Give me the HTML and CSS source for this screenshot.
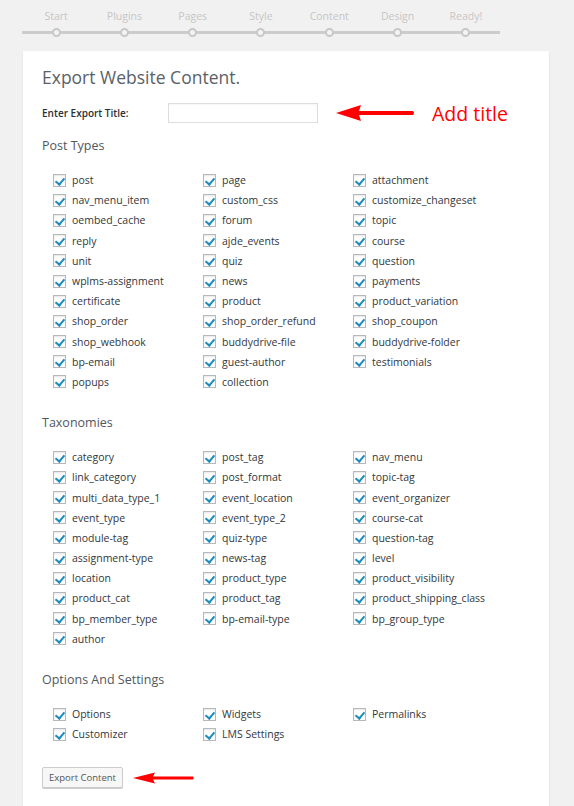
FILE: index.html
```html
<!DOCTYPE html>
<html>
<head>
<meta charset="utf-8">
<link rel="stylesheet" href="styles.css">
</head>
<body>
<div class="steps">
  <div class="step"><span class="step-label">Start</span><span class="dot"></span></div>
  <div class="step"><span class="step-label">Plugins</span><span class="dot"></span></div>
  <div class="step"><span class="step-label">Pages</span><span class="dot"></span></div>
  <div class="step"><span class="step-label">Style</span><span class="dot"></span></div>
  <div class="step"><span class="step-label">Content</span><span class="dot"></span></div>
  <div class="step"><span class="step-label">Design</span><span class="dot"></span></div>
  <div class="step"><span class="step-label">Ready!</span><span class="dot"></span></div>
</div>

<div class="card">
  <h1 class="title">Export Website Content.</h1>
  <div class="title-row">
    <label class="field-label">Enter Export Title:</label>
    <input class="field-input" type="text">
    <svg class="arrow-big" width="80" height="18" viewBox="0 0 80 18"><path d="M0 9 L25 1 L23 7 L77 7 Q79 9 77 11 L23 11 L25 17 Z" fill="#f00"/></svg>
    <span class="note">Add title</span>
  </div>

  <h2 class="section">Post Types</h2>
  <div class="grid grid-posts">
    <div class="item"><span class="cb"></span>post</div>
    <div class="item"><span class="cb"></span>page</div>
    <div class="item"><span class="cb"></span>attachment</div>
    <div class="item"><span class="cb"></span>nav_menu_item</div>
    <div class="item"><span class="cb"></span>custom_css</div>
    <div class="item"><span class="cb"></span>customize_changeset</div>
    <div class="item"><span class="cb"></span>oembed_cache</div>
    <div class="item"><span class="cb"></span>forum</div>
    <div class="item"><span class="cb"></span>topic</div>
    <div class="item"><span class="cb"></span>reply</div>
    <div class="item"><span class="cb"></span>ajde_events</div>
    <div class="item"><span class="cb"></span>course</div>
    <div class="item"><span class="cb"></span>unit</div>
    <div class="item"><span class="cb"></span>quiz</div>
    <div class="item"><span class="cb"></span>question</div>
    <div class="item"><span class="cb"></span>wplms-assignment</div>
    <div class="item"><span class="cb"></span>news</div>
    <div class="item"><span class="cb"></span>payments</div>
    <div class="item"><span class="cb"></span>certificate</div>
    <div class="item"><span class="cb"></span>product</div>
    <div class="item"><span class="cb"></span>product_variation</div>
    <div class="item"><span class="cb"></span>shop_order</div>
    <div class="item"><span class="cb"></span>shop_order_refund</div>
    <div class="item"><span class="cb"></span>shop_coupon</div>
    <div class="item"><span class="cb"></span>shop_webhook</div>
    <div class="item"><span class="cb"></span>buddydrive-file</div>
    <div class="item"><span class="cb"></span>buddydrive-folder</div>
    <div class="item"><span class="cb"></span>bp-email</div>
    <div class="item"><span class="cb"></span>guest-author</div>
    <div class="item"><span class="cb"></span>testimonials</div>
    <div class="item"><span class="cb"></span>popups</div>
    <div class="item"><span class="cb"></span>collection</div>
  </div>

  <h2 class="section">Taxonomies</h2>
  <div class="grid grid-tax">
    <div class="item"><span class="cb"></span>category</div>
    <div class="item"><span class="cb"></span>post_tag</div>
    <div class="item"><span class="cb"></span>nav_menu</div>
    <div class="item"><span class="cb"></span>link_category</div>
    <div class="item"><span class="cb"></span>post_format</div>
    <div class="item"><span class="cb"></span>topic-tag</div>
    <div class="item"><span class="cb"></span>multi_data_type_1</div>
    <div class="item"><span class="cb"></span>event_location</div>
    <div class="item"><span class="cb"></span>event_organizer</div>
    <div class="item"><span class="cb"></span>event_type</div>
    <div class="item"><span class="cb"></span>event_type_2</div>
    <div class="item"><span class="cb"></span>course-cat</div>
    <div class="item"><span class="cb"></span>module-tag</div>
    <div class="item"><span class="cb"></span>quiz-type</div>
    <div class="item"><span class="cb"></span>question-tag</div>
    <div class="item"><span class="cb"></span>assignment-type</div>
    <div class="item"><span class="cb"></span>news-tag</div>
    <div class="item"><span class="cb"></span>level</div>
    <div class="item"><span class="cb"></span>location</div>
    <div class="item"><span class="cb"></span>product_type</div>
    <div class="item"><span class="cb"></span>product_visibility</div>
    <div class="item"><span class="cb"></span>product_cat</div>
    <div class="item"><span class="cb"></span>product_tag</div>
    <div class="item"><span class="cb"></span>product_shipping_class</div>
    <div class="item"><span class="cb"></span>bp_member_type</div>
    <div class="item"><span class="cb"></span>bp-email-type</div>
    <div class="item"><span class="cb"></span>bp_group_type</div>
    <div class="item"><span class="cb"></span>author</div>
  </div>

  <h2 class="section">Options And Settings</h2>
  <div class="grid grid-options">
    <div class="item"><span class="cb"></span>Options</div>
    <div class="item"><span class="cb"></span>Widgets</div>
    <div class="item"><span class="cb"></span>Permalinks</div>
    <div class="item"><span class="cb"></span>Customizer</div>
    <div class="item"><span class="cb"></span>LMS Settings</div>
  </div>

  <div class="button-row">
    <button class="btn">Export Content</button>
    <svg class="arrow-small" width="62" height="12" viewBox="0 0 62 12"><path d="M0 6 L22 0.5 L20 4.5 L60 4.5 Q61.5 6 60 7.5 L20 7.5 L22 11.5 Z" fill="#f00"/></svg>
  </div>
</div>
</body>
</html>
```

FILE: styles.css
```css
* { box-sizing: border-box; }

body {
  margin: 0;
  background: #f1f1f1;
  font-family: "Open Sans", "Noto Sans", sans-serif;
  color: #32373c;
}

.steps {
  margin: 0 0 0 22px;
  width: 478px;
  height: 51px;
  display: grid;
  grid-template-columns: repeat(7, 1fr);
  background: linear-gradient(#ccc, #ccc) no-repeat 0 31px / 100% 3px;
}

.step {
  display: flex;
  flex-direction: column;
  align-items: center;
  padding-top: 8px;
}

.step-label {
  font-size: 10.5px;
  line-height: 16px;
  color: #c6c6c6;
  height: 16px;
}

.dot {
  margin-top: 4px;
  width: 9px;
  height: 9px;
  border-radius: 50%;
  border: 2px solid #c8c8c8;
  background: #f4f4f4;
}

.card {
  margin-left: 23px;
  width: 526px;
  height: 760px;
  background: #fff;
  box-shadow: 0 1px 2px rgba(0,0,0,0.1);
  padding: 14px 0 0 19px;
}

.title {
  margin: 0;
  font-size: 17.5px;
  line-height: 24px;
  font-weight: 400;
  color: #5b6168;
}

.title-row {
  margin-top: 14px;
  height: 20px;
  display: flex;
  align-items: center;
}

.field-label {
  width: 126px;
  font-size: 10px;
  font-weight: 600;
  color: #2b2f33;
}

.field-input {
  width: 150px;
  height: 20px;
  border: 1px solid #ddd;
  margin: 0;
  padding: 0;
  box-shadow: inset 0 1px 2px rgba(0,0,0,0.04);
}

.arrow-big {
  margin-left: 18px;
}

.note {
  margin-left: 16px;
  font-size: 19.5px;
  color: #f00;
  line-height: 20px;
  margin-top: 1px;
}

.section {
  margin: 13px 0 0 0;
  font-size: 12.5px;
  line-height: 20px;
  font-weight: 400;
  color: #50575e;
}

.grid + .section { margin-top: 21px; }

.grid {
  margin: 14px 0 0 11px;
  display: grid;
  grid-template-columns: repeat(3, 150px);
  grid-auto-rows: 20.2px;
}

.item {
  display: flex;
  align-items: center;
  font-size: 10.5px;
  color: #32373c;
}

.cb {
  position: relative;
  width: 13px;
  height: 13px;
  border: 1px solid #b4b9be;
  background: #fff;
  box-shadow: inset 0 1px 2px rgba(0,0,0,0.1);
  margin-right: 6px;
  flex: none;
}

.cb::after {
  content: "";
  position: absolute;
  left: 3px;
  top: 1px;
  width: 4px;
  height: 7px;
  border-right: 2px solid #1e8cbe;
  border-bottom: 2px solid #1e8cbe;
  transform: rotate(40deg);
}

.button-row {
  margin-top: 23px;
  display: flex;
  align-items: center;
}

.btn {
  width: 81px;
  height: 21px;
  margin: 0;
  padding: 0;
  border: 1px solid #ccc;
  border-radius: 2px;
  background: #f7f7f7;
  box-shadow: 0 1px 0 #ccc;
  font-family: "Open Sans", "Noto Sans", sans-serif;
  font-size: 9.5px;
  color: #555;
}

.arrow-small {
  margin-left: 10px;
}
```
